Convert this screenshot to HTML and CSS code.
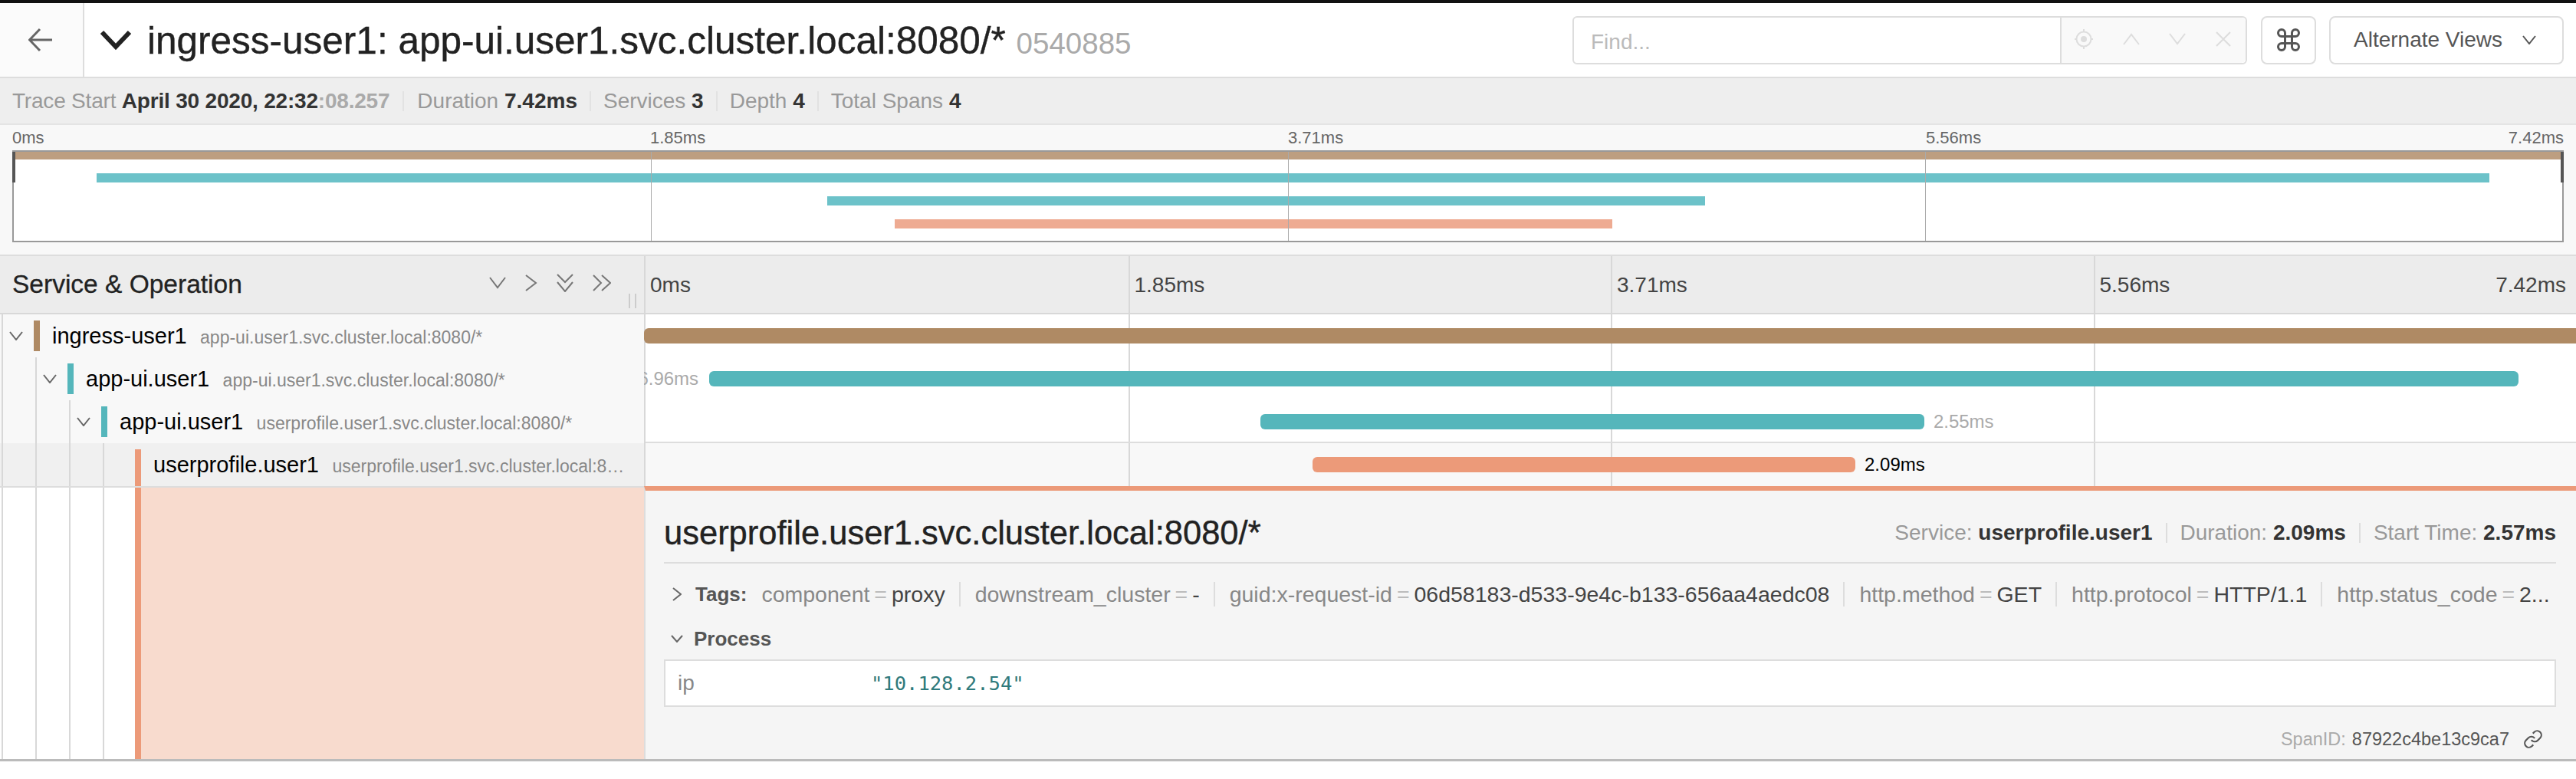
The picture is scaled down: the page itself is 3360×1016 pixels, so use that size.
FILE: index.html
```html
<!DOCTYPE html>
<html lang="en">
<head>
    <meta charset="UTF-8">
    <title>Trace 0540885</title>
    <link rel="stylesheet" href="styles.css">
</head>
<body>
    <div class="top-strip"></div>

    <header class="trace-header">
        <a class="back-link">
            <svg class="ico" width="32" height="32" viewBox="0 0 32 32"><path d="M31 16H2M15 2 1.500 16 15 30"/></svg>
        </a>
        <div class="trace-title">
            <svg class="ico title-chevron" width="42" height="28" viewBox="0 0 42 28"><path d="M3 4 21 23 39 4"/></svg>
            <h1>ingress-user1: app-ui.user1.svc.cluster.local:8080/* <small>0540885</small></h1>
        </div>
        <div class="find-box">
            <span class="find-placeholder">Find...</span>
            <div class="find-actions">
                <svg class="ico" width="26" height="28" viewBox="0 0 26 28"><circle cx="13" cy="14" r="9.500"/><circle class="solid" cx="13" cy="14" r="4"/><path d="M13 1v4M13 23v4M1 14h3M22 14h3"/></svg>
                <svg class="ico" width="24" height="16" viewBox="0 0 24 16"><path d="M2 15 12 2l10 13"/></svg>
                <svg class="ico" width="24" height="16" viewBox="0 0 24 16"><path d="M2 1l10 13L22 1"/></svg>
                <svg class="ico" width="22" height="20" viewBox="0 0 22 20"><path d="M2 1l18 18M20 1 2 19"/></svg>
            </div>
        </div>
        <button class="btn btn-cmd">
            <svg class="ico" width="36" height="36" viewBox="0 0 24 24"><path d="M18 3a3 3 0 0 0-3 3v12a3 3 0 0 0 3 3 3 3 0 0 0 3-3 3 3 0 0 0-3-3H6a3 3 0 0 0-3 3 3 3 0 0 0 3 3 3 3 0 0 0 3-3V6a3 3 0 0 0-3-3 3 3 0 0 0-3 3 3 3 0 0 0 3 3h12a3 3 0 0 0 3-3 3 3 0 0 0-3-3z"/></svg>
        </button>
        <button class="btn btn-views">
            Alternate Views
            <svg class="ico" width="18" height="12" viewBox="0 0 18 12"><path d="M1 1l8 10 8-10"/></svg>
        </button>
    </header>

    <div class="summary">
        <span class="summary-item trace-start">Trace Start <b>April 30 2020, 22:32<em>:08.257</em></b></span>
        <span class="summary-item">Duration <b>7.42ms</b></span>
        <span class="summary-item">Services <b>3</b></span>
        <span class="summary-item">Depth <b>4</b></span>
        <span class="summary-item">Total Spans <b>4</b></span>
    </div>

    <section class="minimap">
        <div class="minimap-labels">
            <span>0ms</span>
            <span>1.85ms</span>
            <span>3.71ms</span>
            <span class="split"><span>5.56ms</span><span>7.42ms</span></span>
        </div>
        <div class="minimap-canvas">
            <i class="mini-bar tan" style="left:0;top:0;width:100%;height:10px"></i>
            <i class="mini-bar teal" style="left:3.25%;top:28px;width:93.89%;height:12px"></i>
            <i class="mini-bar teal" style="left:31.92%;top:58px;width:34.45%;height:12px"></i>
            <i class="mini-bar salmon" style="left:34.57%;top:88px;width:28.16%;height:12px"></i>
            <i class="mini-tick" style="left:25%"></i>
            <i class="mini-tick" style="left:50%"></i>
            <i class="mini-tick" style="left:75%"></i>
            <i class="mini-handle left"></i>
            <i class="mini-handle right"></i>
        </div>
    </section>

    <section class="timeline">
        <div class="tl-header">
            <div class="tl-name-head">
                <h3>Service &amp; Operation</h3>
                <div class="collapse-icons">
                    <svg class="ico" width="22" height="16" viewBox="0 0 22 16"><path d="M1 1l10 13L21 1"/></svg>
                    <svg class="ico" width="16" height="22" viewBox="0 0 16 22"><path d="M1 1l13 10L1 21"/></svg>
                    <svg class="ico" width="22" height="24" viewBox="0 0 22 24"><path d="M1 1l10 10L21 1M1 11l10 12 10-12"/></svg>
                    <svg class="ico" width="24" height="22" viewBox="0 0 24 22"><path d="M1 1l10 10L1 21M12 1l11 10-11 10"/></svg>
                </div>
                <i class="resizer"></i>
            </div>
            <div class="tl-ticks">
                <span>0ms</span>
                <span>1.85ms</span>
                <span>3.71ms</span>
                <span class="split"><span>5.56ms</span><span class="last">7.42ms</span></span>
            </div>
        </div>

        <div class="span-row">
            <div class="span-name">
                <div class="guide">
                    <svg class="ico row-chevron" width="18" height="12" viewBox="0 0 18 12"><path d="M1 1l8 10 8-10"/></svg>
                </div>
                <i class="svc-mark mark-tan"></i>
                <div class="span-label"><b>ingress-user1</b> <span>app-ui.user1.svc.cluster.local:8080/*</span></div>
            </div>
            <div class="span-view">
                <i class="tick" style="left:25%"></i><i class="tick" style="left:50%"></i><i class="tick" style="left:75%"></i>
                <div class="bar bar-tan" style="left:-2px;right:0"></div>
            </div>
        </div>

        <div class="span-row">
            <div class="span-name">
                <div class="guide"></div>
                <div class="guide">
                    <svg class="ico row-chevron" width="18" height="12" viewBox="0 0 18 12"><path d="M1 1l8 10 8-10"/></svg>
                </div>
                <i class="svc-mark mark-teal"></i>
                <div class="span-label"><b>app-ui.user1</b> <span>app-ui.user1.svc.cluster.local:8080/*</span></div>
            </div>
            <div class="span-view">
                <i class="tick" style="left:25%"></i><i class="tick" style="left:50%"></i><i class="tick" style="left:75%"></i>
                <div class="bar bar-teal" style="left:3.3%;width:93.73%"><span class="bar-label before">6.96ms</span></div>
            </div>
        </div>

        <div class="span-row row-last-plain">
            <div class="span-name">
                <div class="guide"></div>
                <div class="guide"></div>
                <div class="guide">
                    <svg class="ico row-chevron" width="18" height="12" viewBox="0 0 18 12"><path d="M1 1l8 10 8-10"/></svg>
                </div>
                <i class="svc-mark mark-teal"></i>
                <div class="span-label"><b>app-ui.user1</b> <span>userprofile.user1.svc.cluster.local:8080/*</span></div>
            </div>
            <div class="span-view">
                <i class="tick" style="left:25%"></i><i class="tick" style="left:50%"></i><i class="tick" style="left:75%"></i>
                <div class="bar bar-teal" style="left:31.85%;width:34.39%"><span class="bar-label">2.55ms</span></div>
            </div>
        </div>

        <div class="span-row row-open">
            <div class="span-name">
                <div class="guide"></div>
                <div class="guide"></div>
                <div class="guide"></div>
                <div class="guide"></div>
                <i class="svc-mark mark-salmon"></i>
                <div class="span-label"><b>userprofile.user1</b> <span>userprofile.user1.svc.cluster.local:8080/*</span></div>
            </div>
            <div class="span-view">
                <i class="tick" style="left:25%"></i><i class="tick" style="left:50%"></i><i class="tick" style="left:75%"></i>
                <div class="bar bar-salmon" style="left:34.55%;width:28.12%"><span class="bar-label dark">2.09ms</span></div>
            </div>
        </div>

        <div class="detail-row">
            <div class="detail-side">
                <div class="guide"></div>
                <div class="guide"></div>
                <div class="guide"></div>
                <div class="guide"></div>
                <div class="detail-tint"></div>
            </div>
            <div class="detail">
                <div class="detail-head">
                    <h2>userprofile.user1.svc.cluster.local:8080/*</h2>
                    <div class="overview">
                        <span>Service: <b>userprofile.user1</b></span>
                        <span>Duration: <b>2.09ms</b></span>
                        <span>Start Time: <b>2.57ms</b></span>
                    </div>
                </div>
                <div class="tags">
                    <svg class="ico tags-chevron" width="12" height="18" viewBox="0 0 12 18"><path d="M1 1l10 8L1 17"/></svg>
                    <strong>Tags:</strong>
                    <div class="kv-list">
                        <span class="kv">component <i>=</i> <b>proxy</b></span>
                        <span class="kv">downstream_cluster <i>=</i> <b>-</b></span>
                        <span class="kv">guid:x-request-id <i>=</i> <b>06d58183-d533-9e4c-b133-656aa4aedc08</b></span>
                        <span class="kv">http.method <i>=</i> <b>GET</b></span>
                        <span class="kv">http.protocol <i>=</i> <b>HTTP/1.1</b></span>
                        <span class="kv">http.status_code <i>=</i> <b>2...</b></span>
                    </div>
                </div>
                <div class="process">
                    <svg class="ico process-chevron" width="16" height="10" viewBox="0 0 16 10"><path d="M1 1l7 8 7-8"/></svg>
                    <strong>Process</strong>
                </div>
                <div class="process-table">
                    <span class="pkey">ip</span>
                    <span class="pval">"10.128.2.54"</span>
                </div>
                <div class="span-id">
                    SpanID: <b>87922c4be13c9ca7</b>
                    <svg class="ico" width="26" height="26" viewBox="0 0 24 24"><path d="M10 13a5 5 0 0 0 7.540.540l3-3a5 5 0 0 0-7.070-7.070l-1.720 1.710"/><path d="M14 11a5 5 0 0 0-7.540-.540l-3 3a5 5 0 0 0 7.070 7.070l1.710-1.710"/></svg>
                </div>
            </div>
        </div>
    </section>
</body>
</html>
```

FILE: styles.css
```css
* {
    box-sizing: border-box;
}
body {
    margin: 0;
    font-family: "Liberation Sans", Arial, sans-serif;
    color: #333;
    background: #fff;
}
.ico {
    fill: none;
    stroke: currentColor;
    stroke-width: 2;
    flex: none;
}
.ico .solid {
    fill: currentColor;
    stroke: none;
}
.top-strip {
    height: 4px;
    background: #111;
}

/* header */
.trace-header {
    display: flex;
    align-items: center;
    height: 98px;
    border-bottom: 2px solid #ddd;
}
.back-link {
    display: flex;
    align-items: center;
    justify-content: center;
    width: 110px;
    height: 96px;
    background: #fbfbfb;
    border-right: 2px solid #ddd;
    color: #666;
    padding-right: 2px;
}
.back-link .ico {
    stroke-width: 3;
}
.trace-title {
    display: flex;
    align-items: center;
    flex: 1;
    padding-left: 20px;
    min-width: 0;
}
.title-chevron {
    color: #222;
    stroke-width: 6;
}
.trace-title h1 {
    margin: 0 0 0 20px;
    font-size: 49.500px;
    font-weight: normal;
    color: #222;
    white-space: nowrap;
    -webkit-text-stroke: 0.4px #222;
}
.trace-title small {
    font-size: 38.500px;
    color: #aaa;
    -webkit-text-stroke: 0;
}
.find-box {
    display: flex;
    width: 880px;
    height: 63px;
    border: 2px solid #ddd;
    border-radius: 6px;
    margin-right: 18px;
}
.find-placeholder {
    flex: 1;
    padding-left: 22px;
    font-size: 28px;
    line-height: 64px;
    color: #bbb;
}
.find-actions {
    display: flex;
    align-items: center;
    justify-content: space-between;
    width: 242px;
    padding: 0 18px 2px 16px;
    background: #f9f9f9;
    border-left: 2px solid #ddd;
    border-radius: 0 6px 6px 0;
    color: #ddd;
}
.btn {
    display: flex;
    align-items: center;
    height: 63px;
    padding: 0;
    background: #fff;
    border: 2px solid #ddd;
    border-radius: 8px;
    font-family: inherit;
    font-size: 28px;
    color: #555;
    cursor: pointer;
}
.btn-cmd {
    justify-content: center;
    width: 72px;
    margin-right: 17px;
}
.btn-views {
    justify-content: space-between;
    width: 306px;
    padding: 0 34px 0 30px;
    margin-right: 16px;
}

/* summary */
.summary {
    display: flex;
    align-items: center;
    height: 61px;
    padding-left: 16px;
    background: #eee;
    border-bottom: 2px solid #e4e4e4;
    font-size: 28px;
    color: #999;
}
.summary-item {
    padding-right: 16px;
    margin-right: 16px;
    border-right: 2px solid #e2e2e2;
    line-height: 26px;
    white-space: nowrap;
}
.summary-item:last-child {
    border-right: none;
}
.trace-start {
    letter-spacing: -0.2px;
    padding-right: 17px;
    margin-right: 17px;
}
.summary b {
    color: #333;
}
.summary em {
    font-style: normal;
    color: #aaa;
}

/* minimap */
.minimap {
    height: 171px;
    padding: 0 16px;
    background: #f8f8f8;
    border-bottom: 2px solid #ddd;
}
.minimap-labels {
    display: grid;
    grid-template-columns: repeat(4, 1fr);
    height: 33px;
    padding-top: 4px;
    font-size: 22px;
    line-height: 26px;
    color: #666;
}
.split {
    display: flex;
    justify-content: space-between;
}
.minimap-canvas {
    position: relative;
    height: 120px;
    background: #fff;
    border: 2px solid #999;
}
.mini-bar {
    position: absolute;
    display: block;
}
.tan {
    background: #bd9e80;
}
.teal {
    background: #6cc2c9;
}
.salmon {
    background: #eeab92;
}
.mini-tick {
    position: absolute;
    top: 0;
    bottom: 0;
    width: 1px;
    background: #aaa;
}
.mini-handle {
    position: absolute;
    top: 0;
    width: 4px;
    height: 40px;
    background: #555;
}
.mini-handle.left {
    left: -2px;
}
.mini-handle.right {
    right: -2px;
}

/* timeline */
.tl-header {
    display: flex;
    height: 76px;
    background: #ececec;
    border-bottom: 2px solid #d8d8d8;
}
.tl-name-head {
    position: relative;
    display: flex;
    align-items: center;
    width: 842px;
    padding: 0 0 1px 16px;
    border-right: 2px solid #d8d8d8;
}
.tl-name-head h3 {
    margin: 0;
    font-size: 33.500px;
    font-weight: normal;
    color: #222;
    -webkit-text-stroke: 0.3px #222;
}
.collapse-icons {
    display: flex;
    align-items: center;
    gap: 25px;
    margin-left: auto;
    margin-right: 43px;
    margin-bottom: 3px;
    color: #777;
}
.resizer {
    position: absolute;
    left: 820px;
    top: 49px;
    width: 10px;
    height: 19px;
    border-left: 2px solid #ccc;
    border-right: 2px solid #ccc;
}
.tl-ticks {
    display: grid;
    grid-template-columns: repeat(4, 1fr);
    flex: 1;
    font-size: 28px;
    line-height: 76px;
    color: #444;
}
.tl-ticks > span {
    padding-left: 6px;
    border-left: 2px solid #d8d8d8;
}
.tl-ticks > span:first-child {
    border-left: none;
}
.tl-ticks .last {
    margin-right: 13px;
}
.span-row {
    display: flex;
    height: 56px;
}
.span-name {
    display: flex;
    width: 842px;
    background: #f8f8f8;
    border-right: 2px solid #d8d8d8;
}
.guide {
    display: flex;
    align-items: center;
    flex: none;
    width: 42px;
    margin-left: 2px;
    border-left: 2px solid #d8d8d8;
    color: #666;
}
.row-chevron {
    margin: 0 0 0 8px;
}
.svc-mark {
    flex: none;
    width: 8px;
    height: 40px;
    margin-top: 8px;
}
.mark-tan {
    background: #af8a64;
}
.mark-teal {
    background: #55b6bb;
}
.mark-salmon {
    background: #ec9a79;
    height: 48px;
}
.span-label {
    flex: 1;
    min-width: 0;
    padding: 0 14px 0 16px;
    font-size: 23px;
    line-height: 56px;
    color: #888;
    white-space: nowrap;
    overflow: hidden;
    text-overflow: ellipsis;
}
.span-label b {
    font-size: 29px;
    font-weight: normal;
    color: #000;
    margin-right: 11px;
}
.span-view {
    position: relative;
    flex: 1;
    clip-path: inset(0 0 0 -2px);
}
.tick {
    position: absolute;
    top: 0;
    bottom: 0;
    width: 2px;
    background: #d8d8d8;
}
.bar {
    position: absolute;
    top: 18px;
    height: 20px;
    border-radius: 6px;
}
.bar-tan {
    background: #af8a64;
    border-radius: 6px 0 0 6px;
}
.bar-teal {
    background: #55b6bb;
}
.bar-salmon {
    background: #ec9a79;
}
.bar-label {
    position: absolute;
    left: 100%;
    top: -4px;
    margin-left: 12px;
    font-size: 24px;
    line-height: 28px;
    color: #aaa;
    white-space: nowrap;
}
.bar-label.before {
    left: auto;
    right: 100%;
    margin: 0 14px 0 0;
}
.bar-label.dark {
    color: #000;
}
.row-last-plain .span-view {
    border-bottom: 2px solid #ddd;
}
.row-open .span-name {
    background: #f0f0f0;
}
.row-open .span-view {
    background: #f8f8f8;
}

/* open span */
.detail-row {
    display: flex;
    height: 359px;
    border-bottom: 3px solid #bbb;
}
.detail-side {
    display: flex;
    width: 842px;
    border-top: 2px solid #ddd;
}
.detail-tint {
    flex: 1;
    background: #f8dbce;
    border-left: 8px solid #ec9a79;
}
.detail {
    flex: 1;
    min-width: 0;
    padding: 0 26px 0 24px;
    background: #f5f5f5;
    border-top: 6px solid #ec9a79;
    border-left: 2px solid #ddd;
    margin-left: -2px;
}
.detail-head {
    display: flex;
    align-items: center;
    justify-content: space-between;
    height: 95px;
    padding-top: 17px;
    border-bottom: 2px solid #ddd;
}
.detail-head h2 {
    margin: 0;
    font-size: 43.500px;
    font-weight: normal;
    color: #222;
    -webkit-text-stroke: 0.4px #222;
}
.overview {
    display: flex;
    font-size: 28px;
    line-height: 26px;
    color: #999;
}
.overview span {
    padding: 0 17px;
    border-left: 2px solid #ddd;
}
.overview span:first-child {
    border-left: none;
}
.overview span:last-child {
    padding-right: 0;
}
.overview b {
    color: #333;
}
.tags {
    display: flex;
    align-items: center;
    height: 80px;
    font-size: 26px;
}
.tags-chevron {
    margin: 0 18px 0 11px;
    color: #666;
}
.tags strong {
    color: #555;
}
.kv-list {
    display: flex;
    flex: 1;
    min-width: 0;
    margin-left: 19px;
    white-space: nowrap;
    font-size: 28.500px;
}
.kv {
    padding: 0 18px 0 19px;
    line-height: 32px;
    color: #888;
    border-left: 2px solid #ddd;
}
.kv:first-child {
    padding-left: 0;
    border-left: none;
}
.kv:last-child {
    padding-right: 0;
}
.kv b {
    font-weight: normal;
    color: #444;
}
.kv i {
    margin: 0 -2px;
    font-style: normal;
    color: #bbb;
}
.process {
    display: flex;
    align-items: center;
    height: 36px;
    font-size: 26px;
}
.process-chevron {
    margin: 0 14px 0 9px;
    color: #666;
}
.process strong {
    color: #555;
}
.process-table {
    display: flex;
    align-items: center;
    height: 62px;
    margin-top: 9px;
    padding-left: 16px;
    background: #fff;
    border: 2px solid #ddd;
}
.pkey {
    width: 252px;
    font-size: 28px;
    color: #888;
}
.pval {
    font-family: "DejaVu Sans Mono", monospace;
    font-size: 25.500px;
    color: #2f7a7c;
}
.span-id {
    display: flex;
    align-items: center;
    justify-content: flex-end;
    gap: 8px;
    height: 40px;
    margin-top: 22px;
    padding-right: 17px;
    font-size: 23.500px;
    color: #aaa;
}
.span-id b {
    font-weight: normal;
    color: #555;
}
.span-id .ico {
    margin-left: 10px;
    color: #555;
}
```
